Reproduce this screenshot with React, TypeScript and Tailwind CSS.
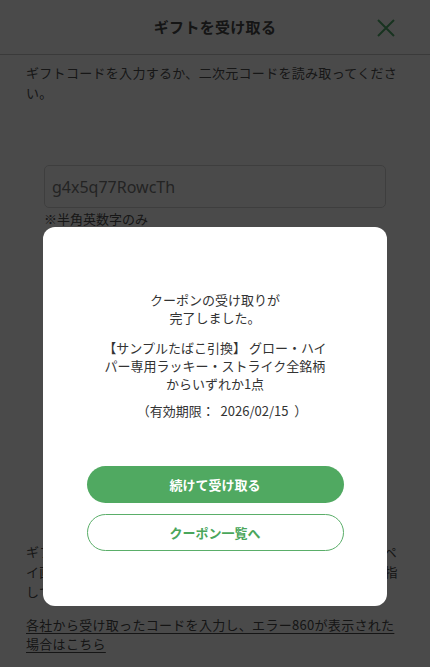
import React from 'react';

const jp = { fontFamily: '"Noto Sans CJK JP", "Noto Sans", sans-serif' };

function CloseIcon() {
  return (
    <svg className="w-[20px] h-[20px]" viewBox="0 0 20 20" fill="none" stroke="#52b06e" strokeWidth={2}>
      <path d="M2 2l16 16M18 2L2 18" />
    </svg>
  );
}

export default function App() {
  return (
    <div className="relative w-[430px] h-[667px] overflow-hidden bg-white" style={jp}>
      {/* Page behind the dialog */}
      <header className="relative h-[55px] flex items-center justify-center border-b border-[#c8c8c8]">
        <h1 className="text-[15px] font-bold text-[#4a4a4a] tracking-[0.3px]">ギフトを受け取る</h1>
        <button className="absolute right-[34px] top-[18px]">
          <CloseIcon />
        </button>
      </header>

      <div className="px-[26px]">
        <p className="pt-[8px] text-[13px] tracking-[0.3px] leading-[20px] text-[#4f4f4f]">
          ギフトコードを入力するか、二次元コードを読み取ってくださ
          <br />
          い。
        </p>

        <div className="mt-[62px] px-[18px]">
          <div className="h-[43px] flex items-center px-[7px] border border-[#d6d6d6] rounded-[5px]">
            <span className="text-[16px] text-[#7a7a7a]" style={{ fontFamily: '"Noto Sans", Inter, sans-serif' }}>
              g4x5q77RowcTh
            </span>
          </div>
          <p className="mt-[2px] text-[13px] leading-[18px] text-[#4f4f4f]">※半角英数字のみ</p>
        </div>

        <p className="mt-[314px] text-[13px] tracking-[0.3px] leading-[20px] text-[#4f4f4f]">
          ギフトコードはクーポン一覧に追加されます。ご利用の際はペ
          <br />
          イ画面からクーポンを選択し、店舗スタッフの指示に従って指
          <br />
          しています。
        </p>

        <a className="block mt-[13px] text-[13px] tracking-[0.3px] leading-[19px] text-[#4a4a4a] underline underline-offset-[3px]">
          各社から受け取ったコードを入力し、エラー860が表示された
          <br />
          場合はこちら
        </a>
      </div>

      {/* Dim backdrop + completion dialog */}
      <div className="absolute inset-0 bg-black/[0.71] flex justify-center pt-[227px]">
        <div className="w-[344px] h-[379px] bg-white rounded-[12px] flex flex-col items-center pt-[64px]">
          <p className="text-center text-[13px] leading-[18px] text-[#333]">
            クーポンの受け取りが
            <br />
            完了しました。
          </p>
          <p className="mt-[12px] text-center text-[13px] leading-[18px] text-[#333]">
            【サンプルたばこ引換】 グロー・ハイ
            <br />
            パー専用ラッキー・ストライク全銘柄
            <br />
            からいずれか1点
          </p>
          <p className="mt-[9px] pl-[14px] text-center text-[13px] leading-[18px] text-[#333]">
            （有効期限：&nbsp;&nbsp;2026/02/15&nbsp;&nbsp;）
          </p>

          <button className="mt-[46px] w-[257px] h-[37px] rounded-full bg-[#50a961] text-white text-[13px] font-bold">
            続けて受け取る
          </button>
          <button className="mt-[11px] w-[257px] h-[37px] rounded-full border border-[#5aae69] bg-white text-[#4aa65b] text-[13px] font-bold">
            クーポン一覧へ
          </button>
        </div>
      </div>
    </div>
  );
}
